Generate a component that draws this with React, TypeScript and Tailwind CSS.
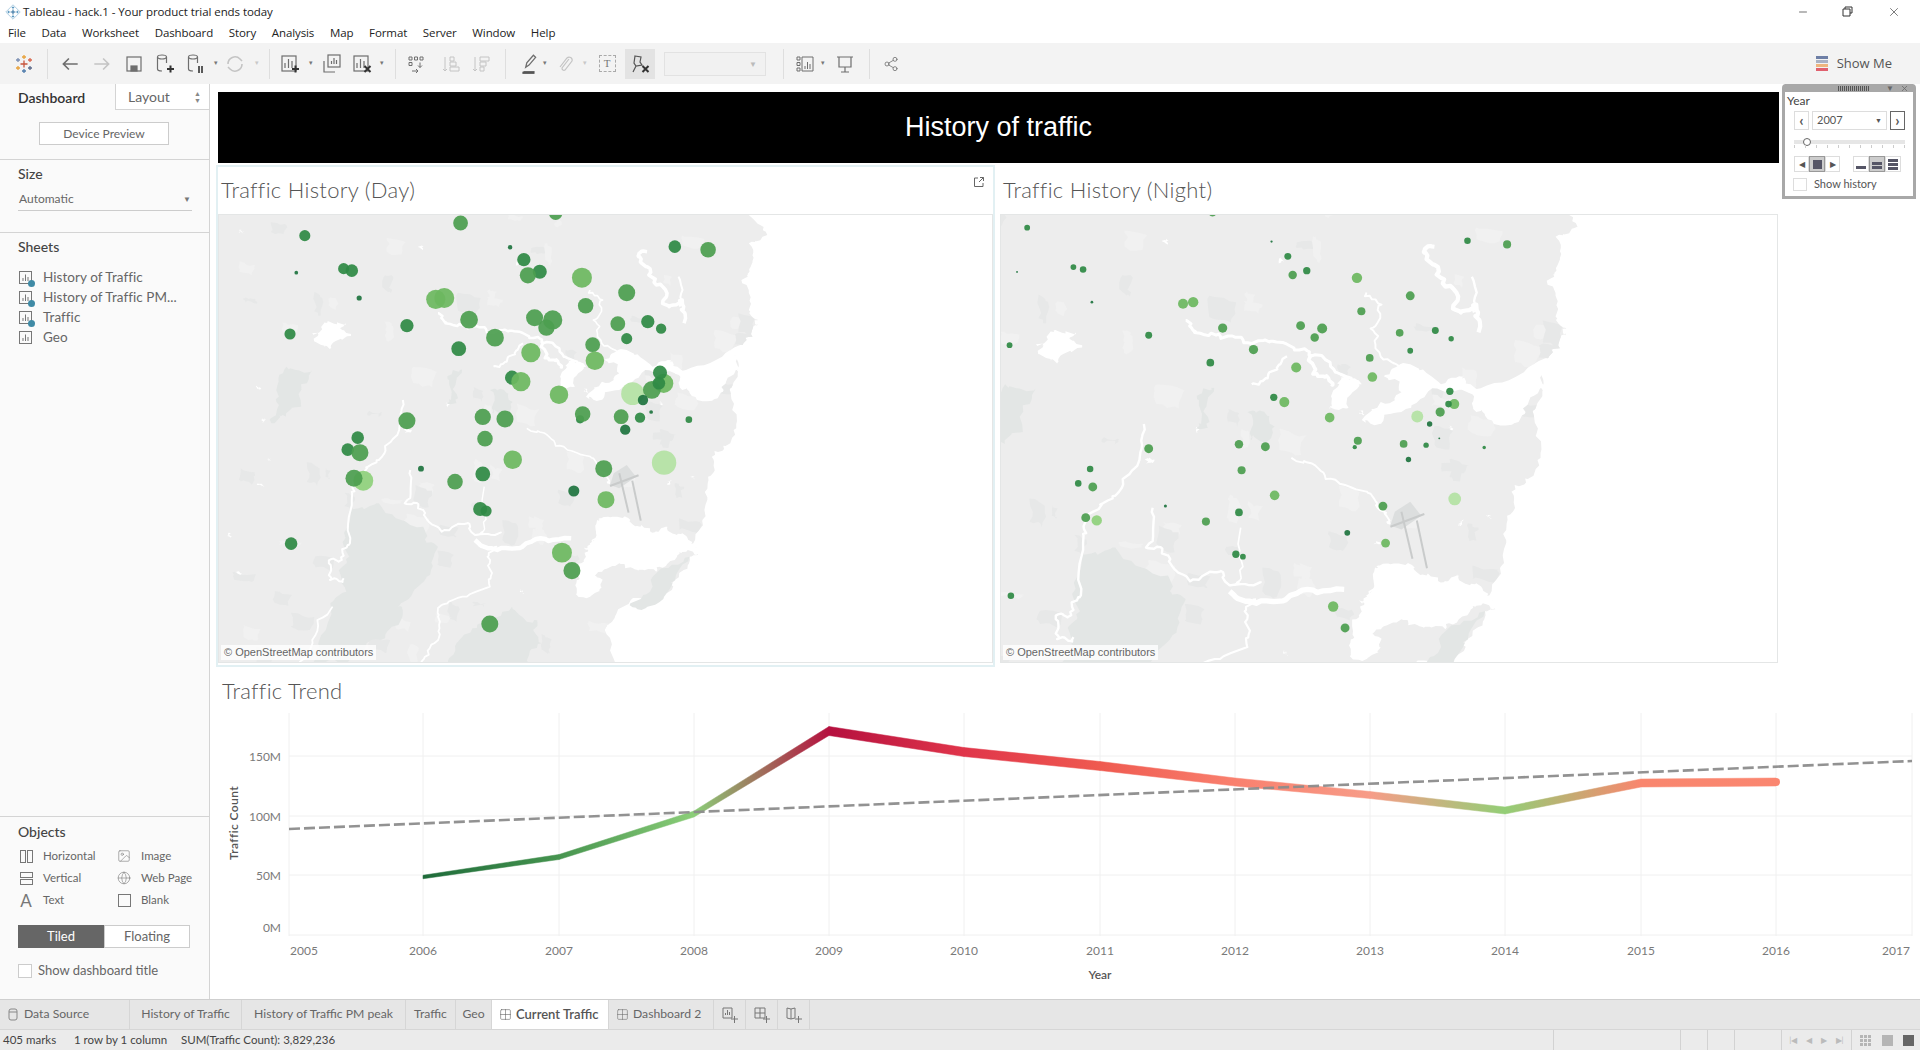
import { ReactNode } from "react";
import { Globe, Image, Share2, Minus, X, Grid2x2 } from "lucide-react";

const DARK = "#2f8a45";
const MID = "#4c9e50";
const LIGHT = "#6db860";
const PALE = "#8fd17c";
const FAINT = "#b4e2a4";
const DEEP = "#1f7440";

// [x, y, diameter, colour], traced off the day map, same stations on both maps
const stations: [number, number, number, string][] = [
  [918, 10, 36, MID], [661, 39, 40, MID], [240, 77, 30, DARK], [795, 112, 12, DEEP], [1240, 110, 34, DARK],
  [1330, 119, 42, MID], [217, 188, 10, DEEP], [345, 176, 30, DARK], [367, 182, 34, DARK], [832, 149, 36, DARK],
  [875, 185, 38, DARK], [843, 196, 44, MID], [989, 203, 54, LIGHT], [387, 264, 14, DEEP], [1110, 248, 46, MID],
  [594, 268, 52, LIGHT], [617, 264, 54, LIGHT], [999, 287, 42, MID], [684, 329, 48, MID], [893, 353, 44, MID],
  [861, 323, 46, MID], [910, 330, 52, MID], [516, 347, 36, DARK], [1086, 341, 40, MID], [1167, 335, 36, DARK],
  [1203, 356, 28, DARK], [200, 372, 30, DARK], [754, 383, 48, MID], [1110, 386, 30, DARK], [656, 416, 40, DARK],
  [1018, 404, 40, MID], [851, 428, 52, LIGHT], [1024, 452, 50, LIGHT], [800, 503, 38, DARK], [824, 515, 52, LIGHT],
  [1126, 551, 62, FAINT], [1210, 520, 52, LIGHT], [1200, 488, 38, DARK], [1178, 540, 48, MID], [1197, 520, 34, DARK],
  [1154, 570, 28, DEEP], [927, 554, 50, LIGHT], [984, 628, 22, DARK], [991, 612, 42, MID], [1176, 606, 10, DEEP],
  [1095, 620, 40, MID], [1146, 623, 28, DARK], [1278, 629, 18, DARK], [1106, 659, 28, DEEP], [721, 621, 44, MID],
  [781, 627, 46, MID], [516, 632, 46, MID], [727, 686, 42, MID], [383, 683, 34, DARK], [356, 719, 34, DARK],
  [389, 728, 46, MID], [802, 749, 50, LIGHT], [1048, 776, 46, MID], [1211, 758, 66, FAINT], [554, 776, 16, DEEP],
  [721, 792, 40, DARK], [646, 815, 42, MID], [398, 812, 54, PALE], [373, 805, 46, MID], [967, 843, 30, DEEP],
  [1054, 869, 46, LIGHT], [714, 897, 38, DARK], [730, 903, 30, DARK], [203, 1001, 34, DARK], [935, 1028, 54, LIGHT],
  [962, 1082, 46, MID], [740, 1242, 46, MID],
];

// little generator so that the traced outlines get a natural wiggle, same result every run
let seed = 7;
const rnd = () => {
  seed = (seed * 16807) % 2147483647;
  return seed / 2147483647;
};

const roughen = (points: string, amp: number, depth = 3) => {
  let pts = points.split(" ").map((p) => p.split(",").map(Number));
  let a = amp;
  for (let d = 0; d < depth; d++) {
    const next: number[][] = [];
    pts.forEach((p, i) => {
      next.push(p);
      const q = pts[i + 1];
      if (q) next.push([(p[0] + q[0]) / 2 + (rnd() - 0.5) * a * 1.2, (p[1] + q[1]) / 2 + (rnd() - 0.5) * a]);
    });
    pts = next;
    a *= 0.6;
  }
  return pts.map((p) => `${p[0].toFixed(0)},${p[1].toFixed(0)}`).join(" ");
};

const coast = roughen(
  "-200,-60 1430,-60 1440,15 1490,75 1440,100 1445,170 1420,210 1440,300 1465,330 1450,380 1390,420 1410,500 1395,600 1390,700 1340,740 1330,800 1320,900 1290,1000 1310,1030 1280,1040 1240,1110 1210,1150 1100,1190 1050,1260 1085,1400 -200,1400",
  26
);

const rivers: [string, number][] = [
  ["600,310 620,340 680,355 750,368 820,365 880,395 940,440 990,470", 2.5],
  ["840,655 900,680 950,720 1020,745 1050,790 1060,820", 1.6],
  ["505,570 495,660 440,750 390,790 368,850 362,1000 340,1050 305,1060 308,1110 345,1105", 2],
  ["525,780 510,880 560,900 610,965 680,940 700,975 770,965", 2],
  ["725,830 725,950 700,975", 1.4],
  ["700,990 760,1020 860,990 960,985", 4.5],
  ["760,1010 740,1060 740,1130 640,1170 600,1220 590,1300 550,1365", 1.8],
  ["315,1190 260,1290 230,1365", 1.8],
  ["1165,125 1145,140 1170,195 1215,240 1225,290 1260,270 1265,340", 3.5],
  ["1250,200 1255,290", 2],
  ["1010,240 1045,270 1020,330 1040,390 1085,425", 1.6],
  ["830,400 790,440 750,470", 2],
  ["880,395 900,450 930,470", 3],
  ["1030,960 1010,1020 1000,1060", 1.4],
].map(([p, w]) => [roughen(p as string, 22), w as number]);

const parks = [
  "360,900 440,880 560,950 600,1010 570,1100 500,1180 500,1230 420,1290 350,1365 260,1365 310,1190 340,1110 360,1040",
  "650,1300 720,1240 800,1190 860,1230 880,1300 850,1365 640,1365",
  "190,470 260,480 230,590 190,620 150,640 170,560",
  "640,480 665,480 650,580 635,570",
  "740,540 790,550 790,610 750,610",
  "1180,1100 1280,1040 1230,1130 1150,1200 1120,1180",
].map((p) => roughen(p + " " + p.split(" ")[0], 30));

const lake = roughen("260,370 300,335 350,340 365,378 310,412 268,395 260,370", 30);
const waters = [
  "1000,560 1040,520 1090,490 1050,450 1110,420 1180,470 1230,450 1270,480 1390,420 1405,480 1370,545 1300,570 1260,540 1240,490 1160,480 1090,540 1040,570 1000,560",
  "930,500 950,450 1000,470 970,530 930,530 930,500",
  "1030,930 1010,1000 1000,1040 980,1090 975,1150 1010,1160 1040,1130 1030,1090 1090,1060 1140,1080 1190,1085 1240,1050 1275,1020 1310,1035 1290,1000 1260,970 1220,950 1190,970 1150,945 1120,930 1060,920 1030,930",
].map((p) => roughen(p, 24));

const patches = Array.from({ length: 110 }, (_, i) => {
  const x = 30 + rnd() * 1400;
  const y = 10 + rnd() * 1340;
  const w = i % 5 === 0 ? 8 : 14 + rnd() * 50;
  const h = i % 5 === 0 ? 8 : 14 + rnd() * 60;
  return {
    x,
    y,
    fill: i % 5 === 0 ? "#fff" : i % 2 ? "#e7e8e8" : "#f1f1f1",
    points: roughen(`${x},${y} ${x + w},${y + h / 4} ${x + w * 0.8},${y + h} ${x},${y + h * 0.8} ${x},${y}`, 14, 2),
  };
});

const Land = ({ id, matrix, grow }: { id: string; matrix: string; grow: number }) => (
  <g transform={matrix}>
    <clipPath id={id}>
      <polygon points={coast} />
    </clipPath>
    <polygon fill="#ededed" points={coast} />
    <g clipPath={`url(#${id})`}>
      {patches.map((p) => (
        <polygon key={`${p.x}-${p.y}`} points={p.points} fill={p.fill} />
      ))}
    </g>
    {parks.map((p) => (
      <polygon key={p} points={p} fill="#e3e6e5" />
    ))}
    <polygon fill="#fff" points={lake} />
    {waters.map((p) => (
      <polygon key={p} fill="#fff" points={p} />
    ))}
    {rivers.map(([p, w]) => (
      <polyline key={p} points={p} fill="none" stroke="#fff" strokeWidth={w * grow} strokeLinejoin="round" vectorEffect="non-scaling-stroke" />
    ))}
    <polygon fill="#dcdede" points="1075,790 1110,765 1135,800 1090,835 1065,825" />
    <g stroke="#c9cbcb" strokeWidth="2">
      <line x1="1090" y1="790" x2="1115" y2="908" vectorEffect="non-scaling-stroke" />
      <line x1="1125" y1="812" x2="1148" y2="932" vectorEffect="non-scaling-stroke" />
      <line x1="1065" y1="828" x2="1142" y2="796" vectorEffect="non-scaling-stroke" />
    </g>
  </g>
);

const TrafficMap = ({ night = false }: { night?: boolean }) => {
  const sx = night ? 0.4403 : 0.37;
  const sy = night ? 0.3983 : 0.3333;
  const ox = night ? -79.5 : -3;
  const oy = night ? -18 : -5;
  return (
    <div className="relative h-[449px] border border-[#e4e6e6]">
      <svg width="100%" height="100%" className="block">
        <Land id={night ? "land-night" : "land-day"} matrix={`translate(${ox} ${oy}) scale(${sx} ${sy})`} grow={night ? 1.2 : 1} />
        {stations.map(([x, y, d, c]) => (
          <circle
            key={`${x}-${y}`}
            cx={x * sx + ox}
            cy={y * sy + oy}
            r={d * 0.185 * (night ? 0.52 : 1)}
            fill={c}
            fillOpacity="0.93"
          />
        ))}
      </svg>
      <div className="absolute bottom-[2px] left-[2px] bg-white/80 px-[3px] text-[11px] leading-[15px] text-[#666] [font-family:'Liberation_Sans',sans-serif]">
        © OpenStreetMap contributors
      </div>
    </div>
  );
};

// year, y, thickness, colour of the trend line
const trend: [number, number, number, string][] = [
  [423, 877, 3.5, "#1e6b3a"],
  [559, 857, 5, "#46944f"],
  [694, 814, 6, "#8bce78"],
  [829, 731, 9, "#b5103f"],
  [964, 752, 9, "#e0354a"],
  [1100, 766, 9, "#ef5a50"],
  [1235, 782, 8, "#f9806e"],
  [1370, 795, 7, "#f79c88"],
  [1505, 810.5, 7, "#93ce76"],
  [1641, 783, 8, "#f9866e"],
  [1776, 782, 8, "#fa8670"],
];

const years = [2005, 2006, 2007, 2008, 2009, 2010, 2011, 2012, 2013, 2014, 2015, 2016, 2017];
const yearX = [289, 423, 559, 694, 829, 964, 1100, 1235, 1370, 1505, 1641, 1776, 1912];

const TrendChart = () => {
  const top = 700;
  const left = 210;
  return (
    <svg width="1710" height="299" className="block [font-family:Lato,sans-serif]">
      <g transform={`translate(${-left} ${-top})`}>
        <defs>
          {trend.slice(1).map((p, i) => (
            <linearGradient key={p[0]} id={`seg${i}`} gradientUnits="userSpaceOnUse" x1={trend[i][0]} x2={p[0]} y1="0" y2="0">
              <stop offset="0" stopColor={trend[i][3]} />
              <stop offset="1" stopColor={p[3]} />
            </linearGradient>
          ))}
        </defs>
        {yearX.map((x) => (
          <line key={x} x1={x} x2={x} y1="713" y2="936" stroke="#f0f0f0" />
        ))}
        {[756, 816, 875, 935].map((y) => (
          <line key={y} x1="289" x2="1912" y1={y} y2={y} stroke="#f0f0f0" />
        ))}
        {trend.slice(1).map((p, i) => {
          const a = trend[i];
          return (
            <polygon
              key={p[0]}
              fill={`url(#seg${i})`}
              stroke={`url(#seg${i})`}
              strokeWidth="0.5"
              points={`${a[0]},${a[1] - a[2] / 2} ${p[0]},${p[1] - p[2] / 2} ${p[0]},${p[1] + p[2] / 2} ${a[0]},${a[1] + a[2] / 2}`}
            />
          );
        })}
        <circle cx="1776" cy="782" r="4" fill="#fa8670" />
        <line x1="289" y1="829" x2="1912" y2="761" stroke="#8c8c8c" strokeOpacity="0.95" strokeWidth="2.6" strokeDasharray="11 4" />
        {years.map((y, i) => (
          <text
            key={y}
            x={yearX[i] + (i === 0 ? 15 : i === 12 ? -16 : 0)}
            y="955"
            textAnchor="middle"
            fontSize="12"
            fill="#7a7a7a"
          >
            {y}
          </text>
        ))}
        {[["150M", 761], ["100M", 821], ["50M", 880], ["0M", 932]].map(([t, y]) => (
          <text key={t} x="281" y={y} textAnchor="end" fontSize="12" fill="#7a7a7a">
            {t}
          </text>
        ))}
        <text x="1100" y="979" textAnchor="middle" fontSize="12" fontWeight="600" fill="#555">
          Year
        </text>
        <text transform="translate(238 823) rotate(-90)" textAnchor="middle" fontSize="12" letterSpacing="0.4" fontWeight="600" fill="#555">
          Traffic Count
        </text>
      </g>
    </svg>
  );
};

const Ico = ({ children, size = 20, box = 20 }: { children: ReactNode; size?: number; box?: number }) => (
  <svg width={size} height={size} viewBox={`0 0 ${box} ${box}`} fill="none" stroke="currentColor" strokeWidth="1.2">
    {children}
  </svg>
);

const Plus = ({ x, y, c, s = 3 }: { x: number; y: number; c: string; s?: number }) => (
  <path d={`M${x - s} ${y}h${s * 2}M${x} ${y - s}v${s * 2}`} stroke={c} strokeWidth="1.3" />
);

const TableauMark = () => (
  <Ico size={20}>
    <Plus x={10} y={10} c="#c8553d" s={3.5} />
    <Plus x={10} y={3} c="#e8a33d" s={2} />
    <Plus x={10} y={17} c="#4f7cac" s={2} />
    <Plus x={4} y={6} c="#7b8fb3" s={2} />
    <Plus x={16} y={6} c="#d9694f" s={2} />
    <Plus x={4} y={14} c="#e8a33d" s={2} />
    <Plus x={16} y={14} c="#5c6b8a" s={2} />
  </Ico>
);

const AppIcon = () => (
  <Ico size={16}>
    <path d="M10 1l9 9-9 9-9-9z" stroke="#9cc3dc" strokeWidth="1" />
    <Plus x={10} y={10} c="#2f6f9f" s={3} />
    <Plus x={10} y={4.5} c="#5b97bf" s={1.5} />
    <Plus x={10} y={15.5} c="#5b97bf" s={1.5} />
    <Plus x={4.5} y={10} c="#5b97bf" s={1.5} />
    <Plus x={15.5} y={10} c="#5b97bf" s={1.5} />
  </Ico>
);

const ChartBars = () => <path d="M6 15V10M9.5 15V6M13 15V8" />;

const BigPlus = () => <path d="M13 16h7M16.5 12.5v7" stroke="#333" strokeWidth="2" />;
const BigX = () => <path d="M13.5 13l6 6M19.5 13l-6 6" stroke="#333" strokeWidth="2" />;
const Cylinder = () => (
  <>
    <ellipse cx="8" cy="4" rx="4.5" ry="2" />
    <path d="M3.5 4v12c0 1 1.5 2 4.5 2M12.5 4v6" />
  </>
);

const Tool = ({ className = "", children, dim = false }: { className?: string; children: ReactNode; dim?: boolean }) => (
  <div className={`flex h-6 w-6 shrink-0 items-center justify-center ${dim ? "text-[#c4c4c4]" : "text-[#6e6e6e]"} ${className}`}>
    {children}
  </div>
);

const Drop = ({ className = "", dim = false }: { className?: string; dim?: boolean }) => (
  <div className={`flex h-6 w-2 shrink-0 items-center justify-center text-[7px] ${dim ? "text-[#c8c8c8]" : "text-[#777]"} ${className}`}>▾</div>
);

const Sep = ({ className = "" }: { className?: string }) => <div className={`h-[30px] w-px shrink-0 bg-[#dedede] ${className}`} />;

const Toolbar = () => (
  <div className="flex h-[41px] shrink-0 items-center bg-[#f3f3f3] pl-3">
    <Tool><TableauMark /></Tool>
    <Sep className="ml-[11px]" />
    <Tool className="ml-[10px]"><Ico size={22}><path d="M17 10H4M9 5l-5 5 5 5" strokeWidth="1.5" /></Ico></Tool>
    <Tool className="ml-2" dim><Ico size={22}><path d="M3 10h13M11 5l5 5-5 5" strokeWidth="1.5" /></Ico></Tool>
    <Tool className="ml-2"><Ico><rect x="3" y="3" width="14" height="14" /><rect x="7" y="12" width="6" height="5" fill="currentColor" /></Ico></Tool>
    <Tool className="ml-[7px]"><Ico size={22} box={22}><Cylinder /><BigPlus /></Ico></Tool>
    <Tool className="ml-[7px]"><Ico size={22} box={22}><Cylinder /><path d="M14 13v7M17 13v7" stroke="#333" strokeWidth="1.6" /></Ico></Tool>
    <Drop className="ml-1" />
    <Tool className="ml-[3px]" dim><Ico><path d="M3 10a7 7 0 0 1 12-5l2 2M17 10a7 7 0 0 1-12 5l-2-2" strokeWidth="1.6" /></Ico></Tool>
    <Drop className="ml-[6px]" dim />
    <Sep className="ml-2" />
    <Tool className="ml-2"><Ico size={22} box={22}><rect x="3" y="3" width="14" height="15" /><ChartBars /><BigPlus /></Ico></Tool>
    <Drop className="ml-[5px]" />
    <Tool className="ml-[5px]"><Ico size={22} box={22}><rect x="7" y="2" width="12" height="12" /><path d="M3 8v11h11M10.5 11V8M13 11V5M15.5 11V7" /></Ico></Tool>
    <Tool className="ml-[6px]"><Ico size={22} box={22}><rect x="3" y="3" width="14" height="15" /><ChartBars /><BigX /></Ico></Tool>
    <Drop className="ml-1" />
    <Sep className="ml-[9px]" />
    <Tool className="ml-2"><Ico><path d="M3 3h3v3H3zM8.5 3h3v3h-3zM14 3h3v3h-3zM3 8.5h3v3H3zM14 8.5v5l-2-2M14 13.5l2-2M6 17h6l-2-2M12 17l-2 2" strokeWidth="1" /></Ico></Tool>
    <Tool className="ml-[11px]" dim><Ico><path d="M4 3v14M2 15l2 2 2-2M9 3h4v4H9zM9 8h6v4H9zM9 13h9v4H9z" strokeWidth="1" /></Ico></Tool>
    <Tool className="ml-[6px]" dim><Ico><path d="M4 3v14M2 15l2 2 2-2M9 3h9v4H9zM9 8h6v4H9zM9 13h4v4H9z" strokeWidth="1" /></Ico></Tool>
    <Sep className="ml-3" />
    <Tool className="ml-[11px]"><Ico size={22}><path d="M7 13l1-4 6-7 2 2-6 7zM5 17h10" /><path d="M4 18h11" strokeWidth="2" stroke="#555" /></Ico></Tool>
    <Drop />
    <Tool className="ml-1" dim><Ico><path d="M14 5l-7 9a2 2 0 0 0 3 2l7-9a3 3 0 0 0-5-3L5 13" /></Ico></Tool>
    <Drop className="ml-1" dim />
    <Tool className="ml-[6px]"><div className="flex h-[17px] w-[17px] items-center justify-center border border-dashed border-[#aaa] text-[11px] leading-none text-[#777] [font-family:'Liberation_Serif',serif]">T</div></Tool>
    <div className="ml-[6px] flex h-[30px] w-[30px] shrink-0 items-center justify-center bg-[#e3e3e3] text-[#555]">
      <Ico size={22} box={22}><path d="M6 3l6 1-1 5 2 3-6 1-2-3zM7 13l-3 6" /><BigX /></Ico>
    </div>
    <div className="ml-[9px] flex h-6 w-[102px] shrink-0 items-center justify-end border border-[#e2e2e2] bg-[#f1f1f1] pr-2 text-[8px] text-[#bbb]">▼</div>
    <Sep className="ml-[17px]" />
    <Tool className="ml-[9px]"><Ico><path d="M2 3h3v3H2zM2 8.5h3v3H2zM2 14h3v3H2zM7 3h11v14H7zM10 15v-3M12.5 15V8M15 15v-5" strokeWidth="1" /></Ico></Tool>
    <Drop className="ml-[2px]" />
    <Tool className="ml-[6px]"><Ico><path d="M2 3h16M4 3v10h12V3M10 13v5M6 18h8" /></Ico></Tool>
    <Sep className="ml-3" />
    <Tool className="ml-[9px]"><Share2 size={16} strokeWidth={1.2} /></Tool>
    <div className="ml-auto flex items-center gap-[9px] pr-[28px]">
      <div className="flex w-3 flex-col gap-px">
        <div className="h-[3px] bg-[#6e7fa6]" />
        <div className="h-[3px] bg-[#aab2c4]" />
        <div className="h-[3px] bg-[#eeb57e]" />
        <div className="h-[3px] bg-[#e0606e]" />
      </div>
      <span className="text-[13px] text-[#555]">Show Me</span>
    </div>
  </div>
);

const menus = ["File", "Data", "Worksheet", "Dashboard", "Story", "Analysis", "Map", "Format", "Server", "Window", "Help"];

const TitleBar = () => (
  <div className="flex h-[23px] shrink-0 items-center pl-[5px] text-[11.5px] tracking-[-0.07px] text-[#222]">
    <AppIcon />
    <span className="ml-[2px]">Tableau - hack.1 - Your product trial ends today</span>
    <div className="ml-auto flex items-center text-[#333]">
      <Minus size={12} strokeWidth={1.4} className="mr-[33px]" />
      <svg width="11" height="11" viewBox="0 0 11 11" fill="none" stroke="currentColor" className="mr-[34px]">
        <path d="M3 3V1h7v6H8M1 3h7v7H1z" />
      </svg>
      <X size={14} strokeWidth={1.1} className="mr-[19px]" />
    </div>
  </div>
);

const SheetIcon = ({ check = false }: { check?: boolean }) => (
  <div className="relative h-[13px] w-[13px] shrink-0 text-[#777]">
    <svg width="13" height="13" viewBox="0 0 13 13" fill="none" stroke="currentColor">
      <rect x="0.5" y="0.5" width="12" height="12" />
      <path d="M4 10V7M6.5 10V3.5M9 10V6" />
    </svg>
    {check && <div className="absolute -bottom-[3px] -right-[3px] h-[7px] w-[7px] rounded-full bg-[#3f8aa5]" />}
  </div>
);

const Sheet = ({ name, check }: { name: string; check?: boolean }) => (
  <div className="flex h-5 items-center gap-[11px] pl-[19px] text-[13.5px] tracking-[0.05px] text-[#666]">
    <SheetIcon check={check} />
    <span>{name}</span>
  </div>
);

const ObjectItem = ({ icon, label, className = "" }: { icon: ReactNode; label: string; className?: string }) => (
  <div className={`flex h-[22px] items-center text-[11.5px] text-[#666] ${className}`}>
    <div className="flex h-[15px] w-[14px] shrink-0 items-center justify-center text-[#777]">{icon}</div>
    <span className="ml-[10px]">{label}</span>
  </div>
);

const Sidebar = () => (
  <aside className="flex w-[210px] shrink-0 flex-col border-r border-[#d4d4d4] bg-[#fafafa] [font-family:Lato,sans-serif]">
    <div className="flex h-[26px] shrink-0 text-[14px]">
      <div className="flex w-[115px] items-center pl-[18px] font-semibold text-[#333]">Dashboard</div>
      <div className="flex flex-1 items-center justify-between border-b border-l border-[#d4d4d4] bg-white pl-[12px] pr-[8px] text-[#666]">
        <span>Layout</span>
        <span className="text-[7px] leading-[7px] text-[#888]">▲<br />▼</span>
      </div>
    </div>
    <div className="flex h-[50px] shrink-0 items-start border-b border-[#d4d4d4] pl-[39px] pt-[12px]">
      <div className="flex h-[23px] w-[130px] items-center justify-center border border-[#ccc] bg-white text-[12px] text-[#666]">Device Preview</div>
    </div>
    <div className="h-[73px] shrink-0 border-b border-[#d4d4d4] pl-[18px] pt-[3px]">
      <div className="text-[14px] font-medium text-[#444]">Size</div>
      <div className="mt-[4px] flex h-[23px] w-[174px] items-center justify-between border-b border-[#ccc] pl-px pr-[1px] text-[12px] text-[#666]">
        <span>Automatic</span>
        <span className="text-[8px] text-[#777]">▼</span>
      </div>
    </div>
    <div className="pl-[18px] pt-[3px] text-[14px] font-medium text-[#444]">Sheets</div>
    <div className="mt-[10px]">
      <Sheet name="History of Traffic" check />
      <Sheet name="History of Traffic PM..." check />
      <Sheet name="Traffic" check />
      <Sheet name="Geo" />
    </div>
    <div className="mt-auto h-[183px] shrink-0 border-t border-[#d4d4d4] pl-[18px] pt-[4px]">
      <div className="text-[14px] font-medium text-[#444]">Objects</div>
      <div className="mt-[3px] grid w-[180px] grid-cols-[98px_1fr] pl-px">
        <ObjectItem label="Horizontal" icon={<div className="flex gap-px"><div className="h-[13px] w-[6px] border border-[#777]" /><div className="h-[13px] w-[6px] border border-[#777]" /></div>} />
        <ObjectItem label="Image" icon={<Image size={14} strokeWidth={1} />} />
        <ObjectItem label="Vertical" icon={<div className="flex flex-col gap-px"><div className="h-[6px] w-[13px] border border-[#777]" /><div className="h-[6px] w-[13px] border border-[#777]" /></div>} />
        <ObjectItem label="Web Page" icon={<Globe size={14} strokeWidth={1} />} />
        <ObjectItem label="Text" icon={<span className="text-[17px] leading-none">A</span>} />
        <ObjectItem label="Blank" icon={<div className="h-[13px] w-[13px] border border-[#777]" />} />
      </div>
      <div className="mt-[14px] flex h-[23px] w-[172px] text-[13px]">
        <div className="flex w-[86px] items-center justify-center bg-[#666] text-white">Tiled</div>
        <div className="flex w-[86px] items-center justify-center border border-[#ccc] bg-white text-[#666]">Floating</div>
      </div>
      <div className="mt-[13px] flex items-center gap-[6px] text-[13px] text-[#666]">
        <div className="h-[14px] w-[14px] border border-[#ccc] bg-white" />
        <span>Show dashboard title</span>
      </div>
    </div>
  </aside>
);

const YearFilter = () => (
  <div className="absolute right-[4px] top-0 h-[115px] w-[134px] rounded-t-[4px] border-[3px] border-t-0 border-[#a8a8a8] bg-white text-[#555] [font-family:Lato,sans-serif]">
    <div className="flex h-[8px] items-center justify-end gap-[6px] bg-[#a8a8a8] pr-[4px] text-[8px] leading-none text-[#666]">
      <div className="mr-[10px] h-[5px] w-[32px] bg-[repeating-linear-gradient(90deg,#555_0_1px,transparent_1px_2px)]" />
      <span>▼</span>
      <X size={9} strokeWidth={2} />
    </div>
    <div className="pl-[2px] pt-px text-[12px] leading-[15px] text-[#444]">Year</div>
    <div className="ml-[9px] mt-[3px] flex h-[19px] items-stretch gap-[3px]">
      <div className="flex w-[15px] items-center justify-center border border-[#ddd] text-[15px] font-bold leading-none">‹</div>
      <div className="flex w-[75px] items-center justify-between border border-[#ddd] pl-[4px] pr-[4px] text-[11px]">
        <span>2007</span>
        <span className="text-[7px]">▼</span>
      </div>
      <div className="flex w-[15px] items-center justify-center border border-[#666] text-[15px] font-bold leading-none">›</div>
    </div>
    <div className="relative ml-[9px] mt-[10px] h-[4px] w-[111px] bg-[#e6e6e6]">
      <div className="absolute -top-[2px] left-[9px] h-[8px] w-[8px] rounded-full border border-[#666] bg-white" />
      <div className="absolute left-0 right-0 top-[5px] h-[3px] bg-[repeating-linear-gradient(90deg,#ccc_0_1px,transparent_1px_11px)]" />
    </div>
    <div className="ml-[9px] mt-[12px] flex h-[16px] items-stretch text-[8px] text-[#555]">
      <div className="flex w-[15px] items-center justify-center border border-[#ddd]">◀</div>
      <div className="flex w-[16px] items-center justify-center border border-[#999] bg-[#ccc]"><div className="h-[9px] w-[9px] bg-[#556]" /></div>
      <div className="flex w-[15px] items-center justify-center border border-[#ddd]">▶</div>
      <div className="ml-[13px] flex w-[16px] items-end justify-center border border-[#ddd] pb-[2px]"><div className="h-[3px] w-[10px] bg-[#556]" /></div>
      <div className="flex w-[16px] flex-col items-center justify-end gap-px border border-[#999] bg-[#ccc] pb-[2px]"><div className="h-[3px] w-[10px] bg-[#556]" /><div className="h-[3px] w-[10px] bg-[#556]" /></div>
      <div className="flex w-[16px] flex-col items-center justify-center gap-px border border-[#ddd]"><div className="h-[3px] w-[10px] bg-[#556]" /><div className="h-[3px] w-[10px] bg-[#556]" /><div className="h-[3px] w-[10px] bg-[#556]" /></div>
    </div>
    <div className="ml-[8px] mt-[4px] flex items-center gap-[7px] text-[11px]">
      <div className="h-[13px] w-[14px] border border-[#ddd]" />
      <span>Show history</span>
    </div>
  </div>
);

const MapPanel = ({ title, night, selected }: { title: string; night?: boolean; selected?: boolean }) => (
  <div className={`relative h-[502px] ${selected ? "border-2 border-[#e2f0f3]" : "border-2 border-transparent"}`}>
    <div className="flex h-[47px] items-center pb-[3px] pl-[3px] text-[22px] font-light tracking-[0.3px] text-[#555] [font-family:Lato,sans-serif]">{title}</div>
    <TrafficMap night={night} />
    {selected && (
      <svg width="12" height="12" viewBox="0 0 12 12" fill="none" stroke="#666" className="absolute right-[8px] top-[9px]">
        <path d="M5 2H1.5v8.5H10V7M7 1.5h3.5V5M10.5 1.5L6 6" />
      </svg>
    )}
  </div>
);

const tabs: { label: string; w: number; kind?: "ds" | "dash"; active?: boolean }[] = [
  { label: "Data Source", w: 130, kind: "ds" },
  { label: "History of Traffic", w: 112 },
  { label: "History of Traffic PM peak", w: 164 },
  { label: "Traffic", w: 50 },
  { label: "Geo", w: 36 },
  { label: "Current Traffic", w: 117, kind: "dash", active: true },
  { label: "Dashboard 2", w: 105, kind: "dash" },
];

const SheetTabs = () => (
  <div className="flex h-[30px] shrink-0 border-t border-[#cfcfcf] bg-[#e6e6e6] text-[12.2px] text-[#666] [font-family:Lato,sans-serif]">
    {tabs.map((t) => (
      <div
        key={t.label}
        style={{ width: t.w }}
        className={`flex shrink-0 items-center border-r border-[#d6d6d6] ${t.kind === "ds" ? "pl-[8px]" : t.kind ? "pl-[7px]" : "justify-center"} ${t.active ? "bg-white text-[13px] font-semibold text-[#555]" : ""}`}
      >
        {t.kind === "ds" && (
          <svg width="10" height="13" viewBox="0 0 10 13" fill="none" stroke="#888" className="mr-[6px]">
            <rect x="1" y="1" width="8" height="11" rx="2" />
            <path d="M1 4h8" />
          </svg>
        )}
        {t.kind === "dash" && <Grid2x2 size={13} strokeWidth={1} className="mr-[4px]" />}
        {t.label}
      </div>
    ))}
    {[
      <path key="a" d="M2 2h9v10H2zM4.5 9V7M6.5 9V4M8.5 9V6M10 13h7M13.5 10v7" />,
      <path key="b" d="M2 2h10v10H2zM7 2v10M2 7h10M10 13h7M13.5 10v7" />,
      <path key="c" d="M2 2l4 1 4-1v10l-4 1-4-1zM6 3v10M10 13h7M13.5 10v7" />,
    ].map((d, i) => (
      <div key={i} className="flex w-[32px] shrink-0 items-center justify-center border-r border-[#d6d6d6]">
        <svg width="18" height="18" viewBox="0 0 18 18" fill="none" stroke="#777">{d}</svg>
      </div>
    ))}
  </div>
);

const StatusBar = () => (
  <div className="flex h-[21px] shrink-0 items-center border-t border-[#d6d6d6] bg-[#ebebeb] pl-[3px] text-[11.5px] text-[#444] [font-family:Lato,sans-serif]">
    <span className="w-[71px]">405 marks</span>
    <span className="w-[107px]">1 row by 1 column</span>
    <span>SUM(Traffic Count): 3,829,236</span>
    <div className="ml-auto flex h-full items-center">
      <div className="h-full w-[127px] border-l border-[#d2d2d2]" />
      <div className="h-full w-[27px] border-l border-[#d2d2d2]" />
      <div className="h-full w-[27px] border-l border-[#d2d2d2]" />
      <div className="h-full w-[47px] border-l border-[#d2d2d2]" />
      <div className="flex h-full w-[71px] items-center justify-around border-l border-r border-[#d2d2d2] px-[3px] text-[8px] text-[#bbb]">
        <span>|◀</span>
        <span>◀</span>
        <span>▶</span>
        <span>▶|</span>
      </div>
      <div className="flex w-[68px] items-center justify-between pl-[8px] pr-[6px]">
        <div className="grid h-[11px] w-[11px] grid-cols-3 gap-px">
          {[0, 1, 2, 3, 4, 5, 6, 7, 8].map((i) => (
            <div key={i} className="bg-[#b5b5b5]" />
          ))}
        </div>
        <div className="h-[11px] w-[11px] bg-[#b5b5b5]" />
        <div className="h-[11px] w-[11px] bg-[#666]" />
      </div>
    </div>
  </div>
);

const Dashboard = () => (
  <main className="relative min-w-0 flex-1 bg-white">
    <YearFilter />
    <div className="ml-[8px] mt-[8px] flex h-[71px] w-[1561px] items-center justify-center bg-black text-[27px] text-white [font-family:'Liberation_Sans',sans-serif]">
      History of traffic
    </div>
    <div className="ml-[6px] mt-[2px] grid w-[1564px] grid-cols-[779px_782px] gap-[3px]">
      <MapPanel title="Traffic History (Day)" selected />
      <MapPanel title="Traffic History (Night)" night />
    </div>
    <div className="flex h-[33px] items-center pl-[12px] pt-[13px] text-[22px] font-light tracking-[0.3px] text-[#555] [font-family:Lato,sans-serif]">Traffic Trend</div>
    <TrendChart />
  </main>
);

export default function App() {
  return (
    <div className="flex h-[1050px] w-[1920px] flex-col overflow-hidden bg-white [font-family:'Open_Sans',sans-serif]">
      <TitleBar />
      <div className="flex h-[20px] shrink-0 items-center gap-[15.7px] pl-[8px] text-[11.5px] tracking-[-0.1px] text-[#222]">
        {menus.map((m) => (
          <span key={m}>{m}</span>
        ))}
      </div>
      <Toolbar />
      <div className="flex min-h-0 flex-1">
        <Sidebar />
        <Dashboard />
      </div>
      <SheetTabs />
      <StatusBar />
    </div>
  );
}
